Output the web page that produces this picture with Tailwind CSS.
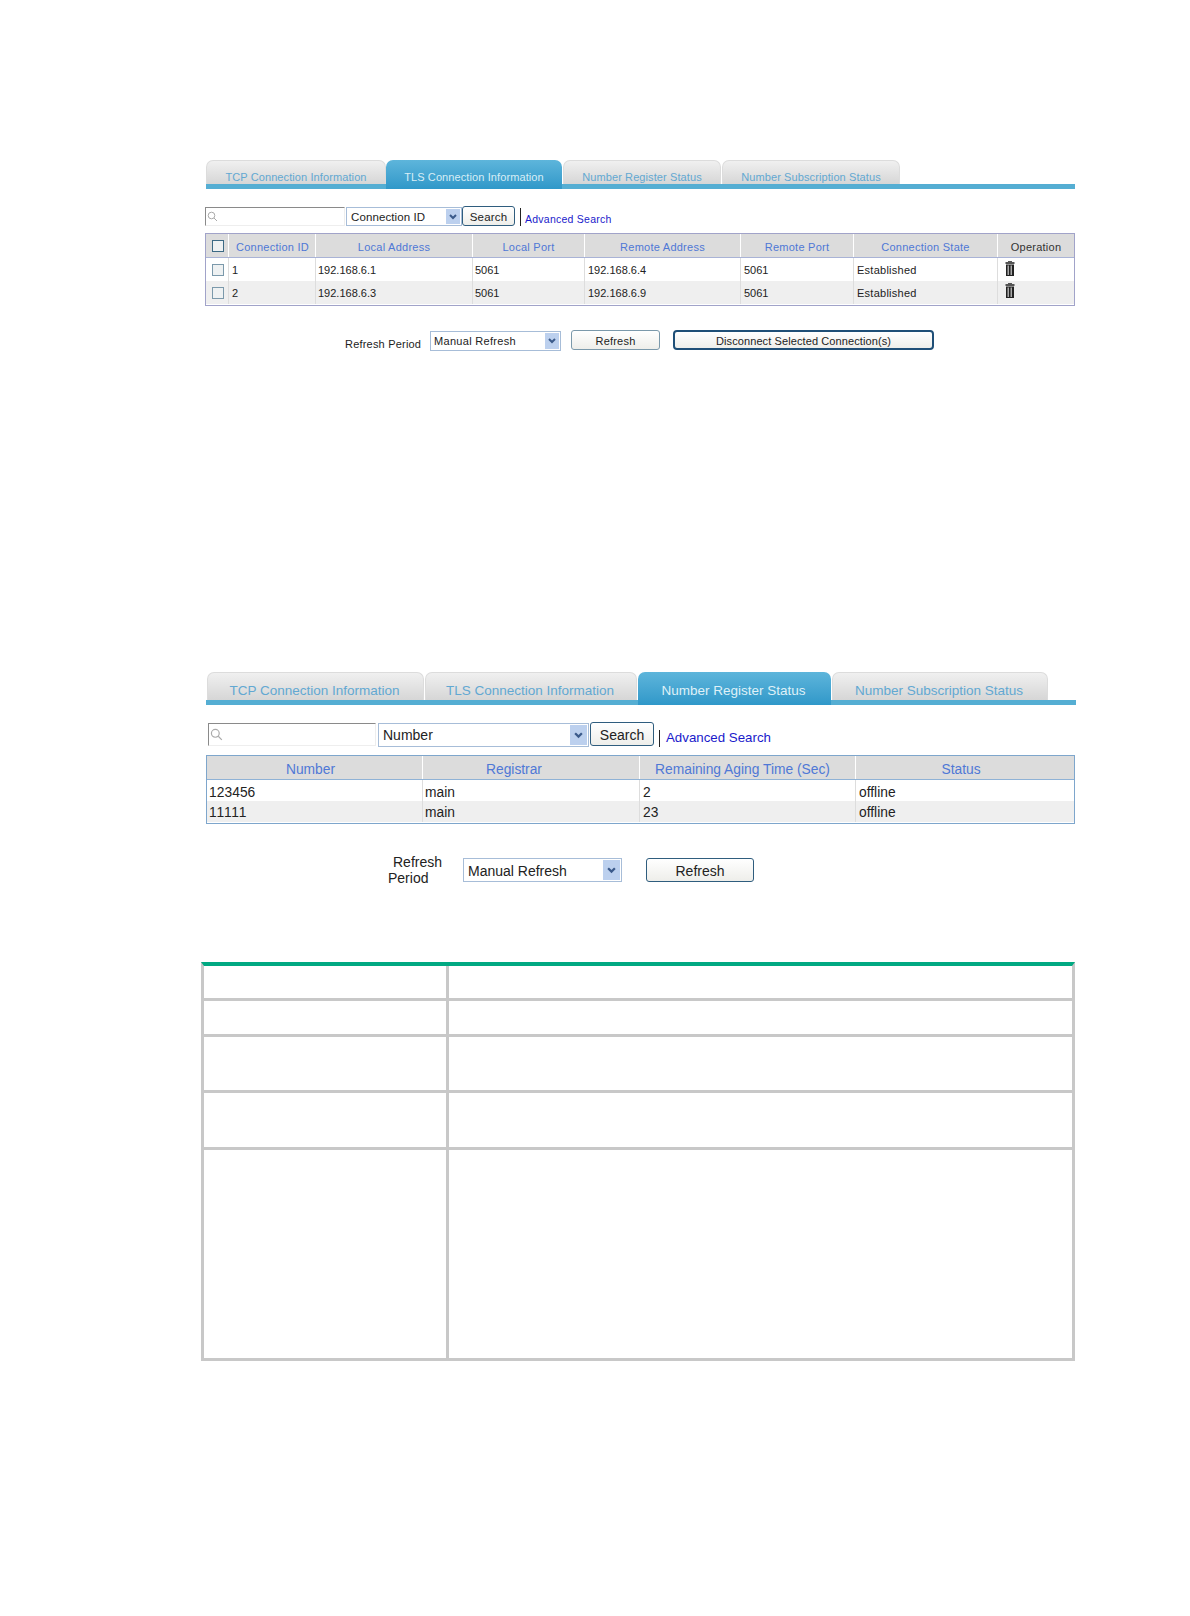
<!DOCTYPE html>
<html><head><meta charset="utf-8"><script src="https://cdn.jsdelivr.net/npm/@tailwindcss/browser@4"></script></head>
<body class="bg-white">
<div class="w-[1190px] h-[1616px] overflow-hidden font-['Liberation_Sans',Arial,sans-serif] text-[#222] pt-[160px]">

<!-- FIRST FIGURE -->
<div class="ml-[206px] w-[869px] h-[29px] flex items-start border-b-[5px] border-[#55aed3] text-[11px] tracking-[0.1px]">
  <div class="w-[180px] h-[24px] rounded-t-[7px] border border-[#dcdcdc] border-b-0 bg-gradient-to-b from-[#f0f0f0] to-[#d6d6d6] flex items-center justify-center text-[#62a8d2] pt-[9px]">TCP Connection Information</div>
  <div class="w-[176px] h-[29px] rounded-t-[7px] bg-gradient-to-b from-[#5db5db] to-[#2f98c9] flex items-center justify-center text-[#d8eef6] pt-[5px]">TLS Connection Information</div>
  <div class="w-[158px] ml-[1px] h-[24px] rounded-t-[7px] border border-[#dcdcdc] border-b-0 bg-gradient-to-b from-[#f0f0f0] to-[#d6d6d6] flex items-center justify-center text-[#62a8d2] pt-[9px]">Number Register Status</div>
  <div class="w-[178px] ml-[1px] h-[24px] rounded-t-[7px] border border-[#dcdcdc] border-b-0 bg-gradient-to-b from-[#f0f0f0] to-[#d6d6d6] flex items-center justify-center text-[#62a8d2] pt-[9px]">Number Subscription Status</div>
</div>

<div class="ml-[205px] mt-[17px] h-[21px] flex items-start text-[11.5px]">
  <div class="w-[140px] h-[19px] mt-[1px] border-t border-l border-t-[#8a8a8a] border-l-[#8a8a8a] border-b border-r border-b-[#eeeeee] border-r-[#eeeeee] flex items-center pl-[1px]">
    <svg class="w-[11px] h-[11px]" viewBox="0 0 11 11" fill="none" stroke="#aaa" stroke-width="1"><circle cx="4.500" cy="4.500" r="3.300"/><path d="M7 7l3 3"/></svg>
  </div>
  <div class="w-[116px] h-[19px] ml-[1px] mt-[1px] border border-[#a7bdd8] flex items-center justify-between pl-[4px] tracking-[0.1px]"><span class="mt-[2px]">Connection ID</span>
    <span class="w-[14px] h-[15px] mr-[1px] bg-[#bcd0ee] flex items-center justify-center"><svg class="w-[8px] h-[6px]" viewBox="0 0 8 6" fill="none" stroke="#3b5a8a" stroke-width="2"><path d="M1 1l3 3 3-3"/></svg></span>
  </div>
  <div class="w-[53px] h-[20px] border border-[#2f5d7e] rounded-[3px] bg-gradient-to-b from-white to-[#eeeeea] flex items-center justify-center tracking-[0.2px] pt-[3px]">Search</div>
  <div class="w-[1px] h-[18px] ml-[5px] mt-[2px] bg-[#222]"></div>
  <div class="ml-[4px] mt-[7px] text-[10.5px] tracking-[0.25px] leading-[13px] text-[#1a1acb]">Advanced Search</div>
</div>

<div class="ml-[205px] mt-[6px] w-[870px] h-[73px] border-[1.5px] border-[#a1a3c9] text-[11px] tracking-[0.25px]">
  <div class="h-[24px] flex bg-[#dcdcdc] border-b border-[#a9b3d6] text-[#4f78d6] text-center leading-[26px]">
    <div class="w-[23px] flex items-center justify-center border-r border-white pl-[1px] pt-[1px]"><span class="w-[12px] h-[12px] border border-[#3c6a85] bg-[#eef1f2]"></span></div>
    <div class="w-[87px] border-r border-white pl-[1px]">Connection ID</div>
    <div class="w-[157px] border-r border-white">Local Address</div>
    <div class="w-[112px] border-r border-white">Local Port</div>
    <div class="w-[156px] border-r border-white">Remote Address</div>
    <div class="w-[113px] border-r border-white">Remote Port</div>
    <div class="w-[144px] border-r border-white">Connection State</div>
    <div class="flex-1 text-[#333]">Operation</div>
  </div>
  <div class="h-[23px] flex bg-white leading-[24px]">
    <div class="w-[23px] flex items-center justify-center border-r border-[#dddddd] pl-[1px]"><span class="w-[12px] h-[12px] border border-[#7b99ab] bg-[#eef1f2]"></span></div>
    <div class="w-[87px] border-r border-[#dddddd] pl-[3px]">1</div>
    <div class="w-[157px] border-r border-[#dddddd] pl-[2px] tracking-[0px]">192.168.6.1</div>
    <div class="w-[112px] border-r border-[#dddddd] pl-[2px] tracking-[0px]">5061</div>
    <div class="w-[156px] border-r border-[#dddddd] pl-[3px] tracking-[0px]">192.168.6.4</div>
    <div class="w-[113px] border-r border-[#dddddd] pl-[3px] tracking-[0px]">5061</div>
    <div class="w-[144px] border-r border-[#dddddd] pl-[3px]">Established</div>
    <div class="flex-1 pl-[7px] pt-[3px]"><svg class="w-[10px] h-[15px]" viewBox="0 0 10 15"><path d="M3 0h4v1h2.500v2H.5V1H3z" fill="#555"/><path d="M1 3.500h8V15H1z" fill="#222"/><path d="M2.500 4.500h1.500v9.500H2.500zM5.500 4.500h1.500v9.500H5.500z" fill="#aaa"/></svg></div>
  </div>
  <div class="h-[23px] flex bg-[#efefef] leading-[25px]">
    <div class="w-[23px] flex items-center justify-center border-r border-[#dddddd] pl-[1px]"><span class="w-[12px] h-[12px] border border-[#7b99ab] bg-[#eef1f2]"></span></div>
    <div class="w-[87px] border-r border-[#dddddd] pl-[3px]">2</div>
    <div class="w-[157px] border-r border-[#dddddd] pl-[2px] tracking-[0px]">192.168.6.3</div>
    <div class="w-[112px] border-r border-[#dddddd] pl-[2px] tracking-[0px]">5061</div>
    <div class="w-[156px] border-r border-[#dddddd] pl-[3px] tracking-[0px]">192.168.6.9</div>
    <div class="w-[113px] border-r border-[#dddddd] pl-[3px] tracking-[0px]">5061</div>
    <div class="w-[144px] border-r border-[#dddddd] pl-[3px]">Established</div>
    <div class="flex-1 pl-[7px] pt-[2px]"><svg class="w-[10px] h-[15px]" viewBox="0 0 10 15"><path d="M3 0h4v1h2.500v2H.5V1H3z" fill="#555"/><path d="M1 3.500h8V15H1z" fill="#222"/><path d="M2.500 4.500h1.500v9.500H2.500zM5.500 4.500h1.500v9.500H5.500z" fill="#aaa"/></svg></div>
  </div>
</div>

<div class="ml-[345px] mt-[24px] h-[21px] flex items-start text-[11px] tracking-[0.2px]">
  <div class="w-[85px] mt-[7px] leading-[14px]">Refresh Period</div>
  <div class="w-[131px] h-[20px] mt-[1px] border border-[#a7bdd8] flex items-center justify-between pl-[3px] tracking-[0.3px]">Manual Refresh
    <span class="w-[14px] h-[16px] mr-[1px] bg-[#bcd0ee] flex items-center justify-center"><svg class="w-[8px] h-[6px]" viewBox="0 0 8 6" fill="none" stroke="#3b5a8a" stroke-width="2"><path d="M1 1l3 3 3-3"/></svg></span>
  </div>
  <div class="w-[89px] h-[20px] ml-[10px] border border-[#7b99ab] rounded-[3px] bg-gradient-to-b from-white to-[#eeeeea] flex items-center justify-center pt-[3px]">Refresh</div>
  <div class="w-[261px] h-[20px] ml-[13px] border-2 border-[#1f4f77] rounded-[4px] bg-gradient-to-b from-white to-[#eeeeea] flex items-center justify-center tracking-[0.1px] pt-[3px]">Disconnect Selected Connection(s)</div>
</div>

<!-- SECOND FIGURE -->
<div class="ml-[206px] mt-[321px] w-[870px] h-[33px] flex items-start pl-[1px] border-b-[5px] border-[#55aed3] text-[13.5px]">
  <div class="w-[217px] h-[28px] rounded-t-[7px] border border-[#dcdcdc] border-b-0 bg-gradient-to-b from-[#f0f0f0] to-[#d6d6d6] flex items-center justify-center text-[#62a8d2] pt-[10px] pr-[2px]">TCP Connection Information</div>
  <div class="w-[212px] ml-[1px] h-[28px] rounded-t-[7px] border border-[#dcdcdc] border-b-0 bg-gradient-to-b from-[#f0f0f0] to-[#d6d6d6] flex items-center justify-center text-[#62a8d2] pt-[10px] pr-[2px]">TLS Connection Information</div>
  <div class="w-[193px] ml-[1px] h-[33px] rounded-t-[7px] bg-gradient-to-b from-[#5db5db] to-[#2f98c9] flex items-center justify-center text-[#dff1f8] pt-[6px] pr-[2px]">Number Register Status</div>
  <div class="w-[216px] ml-[1px] h-[28px] rounded-t-[7px] border border-[#dcdcdc] border-b-0 bg-gradient-to-b from-[#f0f0f0] to-[#d6d6d6] flex items-center justify-center text-[#62a8d2] pt-[10px] pr-[2px]">Number Subscription Status</div>
</div>

<div class="ml-[208px] mt-[17px] h-[25px] flex items-start text-[14px]">
  <div class="w-[168px] h-[23px] mt-[1px] border-t border-l border-t-[#8a8a8a] border-l-[#8a8a8a] border-b border-r border-b-[#eeeeee] border-r-[#eeeeee] flex items-center pl-[1px]">
    <svg class="w-[13px] h-[13px]" viewBox="0 0 11 11" fill="none" stroke="#aaa" stroke-width="1"><circle cx="4.500" cy="4.500" r="3.300"/><path d="M7 7l3 3"/></svg>
  </div>
  <div class="w-[211px] h-[24px] ml-[2px] mt-[1px] border border-[#a7bdd8] flex items-center justify-between pl-[4px]">Number
    <span class="w-[17px] h-[20px] mr-[1px] bg-[#bcd0ee] flex items-center justify-center"><svg class="w-[9px] h-[7px]" viewBox="0 0 8 6" fill="none" stroke="#3b5a8a" stroke-width="2"><path d="M1 1l3 3 3-3"/></svg></span>
  </div>
  <div class="w-[64px] h-[24px] ml-[1px] border border-[#2f5d7e] rounded-[3px] bg-gradient-to-b from-white to-[#eeeeea] flex items-center justify-center pt-[2px]">Search</div>
  <div class="w-[1px] h-[17px] ml-[5px] mt-[8px] bg-[#222]"></div>
  <div class="ml-[6px] mt-[8px] text-[13.3px] leading-[16px] text-[#1a1acb]">Advanced Search</div>
</div>

<div class="ml-[206px] mt-[8px] w-[869px] h-[69px] border-[1.5px] border-[#7ea6cc] text-[13.8px]">
  <div class="h-[24px] flex bg-[#dcdcdc] border-b border-[#8fb2d6] text-[#4f78d6] text-center leading-[28px]">
    <div class="w-[216px] border-r border-white pr-[8px]">Number</div>
    <div class="w-[217px] border-r border-white pr-[34px]">Registrar</div>
    <div class="w-[216px] border-r border-white pr-[10px]">Remaining Aging Time (Sec)</div>
    <div class="flex-1 pr-[8px]">Status</div>
  </div>
  <div class="h-[21px] flex bg-white leading-[25px]">
    <div class="w-[216px] border-r border-[#dddddd] pl-[2px] tracking-[0.05px]">123456</div>
    <div class="w-[217px] border-r border-[#dddddd] pl-[2px]">main</div>
    <div class="w-[216px] border-r border-[#dddddd] pl-[3px]">2</div>
    <div class="flex-1 pl-[3px]">offline</div>
  </div>
  <div class="h-[21px] flex bg-[#efefef] leading-[24px]">
    <div class="w-[216px] border-r border-[#dddddd] pl-[2px] tracking-[0.8px]">11111</div>
    <div class="w-[217px] border-r border-[#dddddd] pl-[2px]">main</div>
    <div class="w-[216px] border-r border-[#dddddd] pl-[3px]">23</div>
    <div class="flex-1 pl-[3px]">offline</div>
  </div>
</div>

<div class="ml-[388px] mt-[34px] h-[33px] flex items-start text-[14px]">
  <div class="w-[75px] leading-[16px] -mt-[4px]"><div class="pl-[5px]">Refresh</div><div>Period</div></div>
  <div class="w-[159px] h-[24px] border border-[#a7bdd8] flex items-center justify-between pl-[4px]"><span class="mt-[2px]">Manual Refresh</span>
    <span class="w-[17px] h-[20px] mr-[1px] bg-[#bcd0ee] flex items-center justify-center"><svg class="w-[9px] h-[7px]" viewBox="0 0 8 6" fill="none" stroke="#3b5a8a" stroke-width="2"><path d="M1 1l3 3 3-3"/></svg></span>
  </div>
  <div class="w-[108px] h-[24px] ml-[24px] border border-[#2f5d7e] rounded-[3px] bg-gradient-to-b from-white to-[#eeeeea] flex items-center justify-center pt-[3px]">Refresh</div>
</div>

<!-- EMPTY TABLE -->
<div class="ml-[201px] mt-[71px] w-[874px] h-[399px] border-t-4 border-t-[#01a982] border-x-[3px] border-b-[3px] border-x-[#c8c8c8] border-b-[#c8c8c8] grid grid-cols-[245px_1fr] grid-rows-[35px_36px_56px_57px_1fr]">
  <div class="border-r-[3px] border-b-[3px] border-[#c8c8c8]"></div><div class="border-b-[3px] border-[#c8c8c8]"></div>
  <div class="border-r-[3px] border-b-[3px] border-[#c8c8c8]"></div><div class="border-b-[3px] border-[#c8c8c8]"></div>
  <div class="border-r-[3px] border-b-[3px] border-[#c8c8c8]"></div><div class="border-b-[3px] border-[#c8c8c8]"></div>
  <div class="border-r-[3px] border-b-[3px] border-[#c8c8c8]"></div><div class="border-b-[3px] border-[#c8c8c8]"></div>
  <div class="border-r-[3px] border-[#c8c8c8]"></div><div></div>
</div>

</div>
</body></html>
